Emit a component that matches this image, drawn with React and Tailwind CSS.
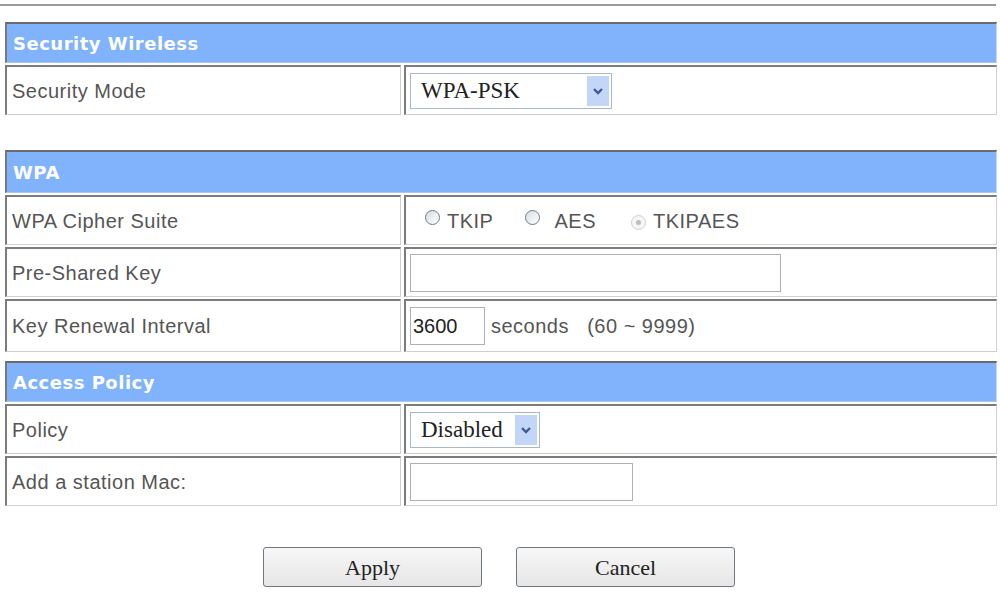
import React from "react";

const labelFont = { fontFamily: '"Liberation Sans", Arial, sans-serif' };

function Header({ children, h = "h-[41px]" }) {
  return (
    <div className={`${h} bg-[#80b3fb] border-t-2 border-t-[#6a6a6a] border-l-2 border-l-[#7a7a7a] border-b border-b-[#a8c8f0] border-r border-r-[#c8d8ee] flex items-center pl-[6px]`}>
      <span className="text-white font-bold text-[18px] tracking-[0.5px]" style={{ fontFamily: '"DejaVu Sans", Verdana, sans-serif' }}>
        {children}
      </span>
    </div>
  );
}

function Row({ label, children, h = "h-[50px]" }) {
  return (
    <div className={`flex gap-[3px] ${h}`}>
      <div className="w-[396px] shrink-0 border-t-2 border-t-[#7c7c7c] border-l-2 border-l-[#7c7c7c] border-b border-b-[#cfcfcf] border-r border-r-[#cfcfcf] flex items-center pl-[5px] bg-white">
        <span className="text-[20px] tracking-[0.5px] text-[#555]" style={labelFont}>{label}</span>
      </div>
      <div className="flex-1 border-t-2 border-t-[#7c7c7c] border-l-2 border-l-[#7c7c7c] border-b border-b-[#cfcfcf] border-r border-r-[#cfcfcf] flex items-center pl-[4px] bg-white">
        {children}
      </div>
    </div>
  );
}

function Select({ value, w }) {
  return (
    <div className={`${w} h-[36px] border border-[#a9b7c9] bg-white flex items-center justify-between pl-[10px] pr-[2px]`}>
      <span className="text-[23px] text-[#222] leading-none" style={{ fontFamily: '"Liberation Serif", "Times New Roman", serif' }}>{value}</span>
      <div className="w-[22px] h-[30px] bg-[#c4d6f7] flex items-center justify-center">
        <svg width="12" height="8" viewBox="0 0 12 8">
          <path d="M2 2 L6 6 L10 2" stroke="#3a5a9a" strokeWidth="2.4" fill="none" />
        </svg>
      </div>
    </div>
  );
}

function Radio({ disabled, checked }) {
  return (
    <span className={`inline-flex items-center justify-center w-[15px] h-[15px] rounded-full border -translate-y-[3px] ${disabled ? "border-[#d0d0d0] bg-[#f6f6f6]" : "border-[#6f7a86] bg-[linear-gradient(135deg,#d6dde6,#ffffff)]"}`}>
      {checked && <span className="w-[5px] h-[5px] rounded-full bg-[#bdbdbd]" />}
    </span>
  );
}

function Input({ w, value }) {
  return (
    <div className={`${w} h-[38px] border border-[#a9b2ba] bg-white flex items-center pl-[2px]`}>
      {value && <span className="text-[20px] text-[#222]" style={labelFont}>{value}</span>}
    </div>
  );
}

function Button({ children }) {
  return (
    <button className="w-[219px] h-[40px] rounded-[3px] border border-[#6f7780] bg-[linear-gradient(#f7f7f7,#e6e6e6)] text-[22px] text-[#222] flex items-center justify-center" style={{ fontFamily: '"Liberation Serif", "Times New Roman", serif' }}>
      {children}
    </button>
  );
}

export default function App() {
  return (
    <div className="w-[1000px] h-[592px] bg-white overflow-hidden relative">
      <div className="pt-[4px] pr-[4px]">
        <div className="h-[2px] bg-[#9a9a9a]" />
      </div>
      <div className="pl-[5px] pr-[3px] pt-[16px] flex flex-col">
        <div className="flex flex-col gap-[2px]">
          <Header>Security Wireless</Header>
          <Row label="Security Mode">
            <Select value="WPA-PSK" w="w-[202px]" />
          </Row>
        </div>

        <div className="flex flex-col gap-[2px] mt-[35px]">
          <Header h="h-[43px]">WPA</Header>
          <Row label="WPA Cipher Suite">
            <div className="flex items-center pl-[15px] text-[20px] tracking-[0.5px] text-[#555]" style={labelFont}>
              <Radio />
              <span className="ml-[7px]">TKIP</span>
              <span className="ml-[32px]"><Radio /></span>
              <span className="ml-[14px]">AES</span>
              <span className="ml-[35px]"><Radio disabled checked /></span>
              <span className="ml-[7px]">TKIPAES</span>
            </div>
          </Row>
          <Row label="Pre-Shared Key">
            <Input w="w-[371px]" />
          </Row>
          <Row label="Key Renewal Interval" h="h-[53px]">
            <Input w="w-[75px]" value="3600" />
            <span className="ml-[6px] text-[20px] tracking-[0.5px] text-[#555]" style={labelFont}>seconds&nbsp;&nbsp;&nbsp;(60 ~ 9999)</span>
          </Row>
        </div>

        <div className="flex flex-col gap-[2px] mt-[9px]">
          <Header>Access Policy</Header>
          <Row label="Policy">
            <Select value="Disabled" w="w-[130px]" />
          </Row>
          <Row label="Add a station Mac:">
            <Input w="w-[223px]" />
          </Row>
        </div>

        <div className="flex justify-center gap-[34px] mt-[41px] pr-[4px]">
          <Button>Apply</Button>
          <Button>Cancel</Button>
        </div>
      </div>
    </div>
  );
}
